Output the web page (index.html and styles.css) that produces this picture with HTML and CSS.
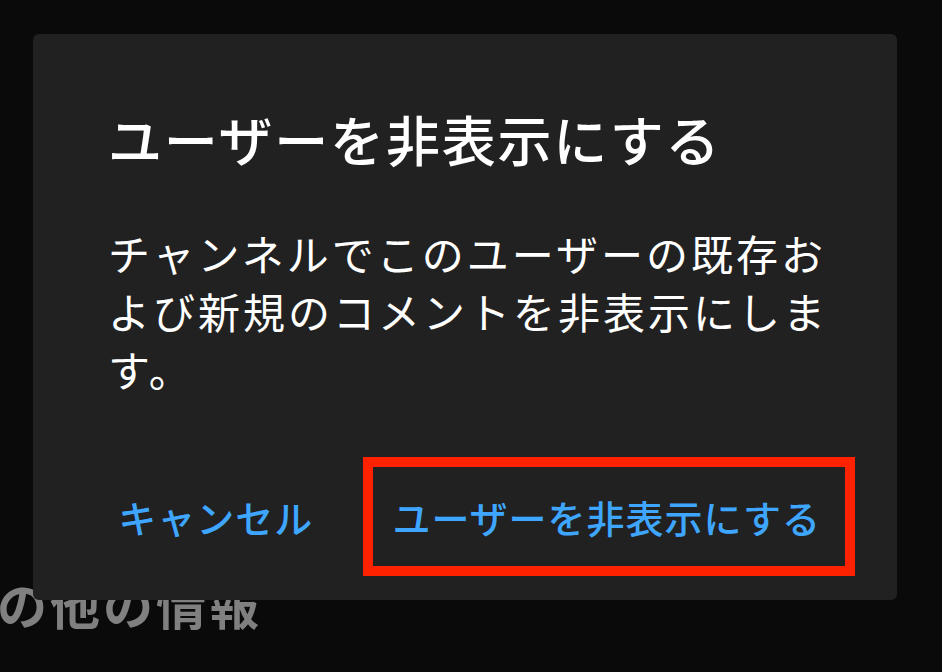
FILE: index.html
```html
<!DOCTYPE html>
<html lang="ja">
<head>
  <meta charset="UTF-8">
  <meta name="viewport" content="width=device-width, initial-scale=1.0">
  <title>ユーザーを非表示にする</title>
  <link rel="stylesheet" href="styles.css">
</head>
<body>

  <div class="page">
    <h3 class="section-title">その他の情報</h3>
  </div>

  <div class="dialog">
    <h2 class="dialog-title">ユーザーを非表示にする</h2>
    <p class="dialog-text">チャンネルでこのユーザーの既存および新規のコメントを非表示にします。</p>
    <div class="dialog-actions">
      <button class="btn">キャンセル</button>
      <button class="btn btn-marked">ユーザーを非表示にする</button>
    </div>
  </div>

</body>
</html>
```

FILE: styles.css
```css
body {
  margin: 0;
  width: 942px;
  height: 672px;
  overflow: hidden;
  background-color: #0a0a0a;
  font-family: "Noto Sans CJK JP", "Noto Sans", sans-serif;
  position: relative;
}

.page {
  padding-top: 567px;
}

.section-title {
  margin: 0 0 0 -56px;
  color: #808080;
  font-size: 50px;
  font-weight: 700;
  line-height: 72px;
  letter-spacing: 3px;
}

/* ダイアログ */
.dialog {
  position: absolute;
  left: 33px;
  top: 34px;
  width: 864px;
  height: 566px;
  box-sizing: border-box;
  background-color: #212121;
  border-radius: 6px;
  padding: 65px 42px 0 75px;
}

.dialog-title {
  margin: 0;
  color: #fff;
  font-size: 54px;
  font-weight: 500;
  line-height: 80px;
  letter-spacing: 1.8px;
}

.dialog-text {
  margin: 45px 0 0;
  color: #fff;
  font-size: 42px;
  font-weight: 400;
  line-height: 58px;
  letter-spacing: 3px;
  padding-right: 10px;
}

.dialog-actions {
  margin-top: 59px;
  display: flex;
  justify-content: flex-end;
  align-items: center;
  gap: 50px;
}

.btn {
  background: none;
  border: none;
  padding: 0;
  color: #3ea6ff;
  font-family: inherit;
  font-size: 38px;
  font-weight: 500;
  letter-spacing: 1px;
  line-height: 48px;
  cursor: pointer;
}

.btn-marked {
  border: 10px solid #ff2200;
  padding: 26px 24px 25px 19px;
}
```
